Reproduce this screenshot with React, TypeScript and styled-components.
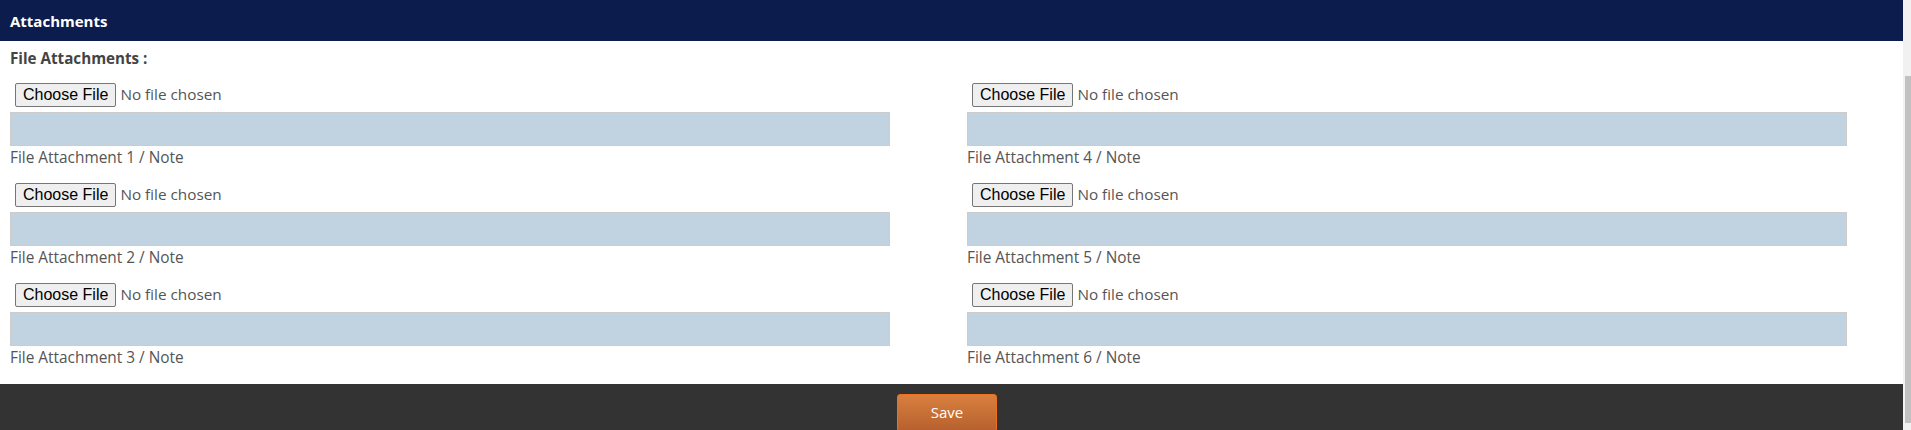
import React from 'react';
import styled, { createGlobalStyle } from 'styled-components';

const GlobalStyle = createGlobalStyle`
  html, body {
    margin: 0;
    padding: 0;
    height: 430px;
    overflow: hidden;
    background: #fff;
    font-family: "Open Sans", "Liberation Sans", sans-serif;
  }
`;

const Page = styled.div`
  display: flex;
  height: 430px;
`;

const Main = styled.div`
  flex: 1;
  display: flex;
  flex-direction: column;
  min-width: 0;
`;

const Header = styled.div`
  height: 41px;
  background: #0c1c4d;
  color: #fff;
  display: flex;
  align-items: center;
  padding-left: 10px;
  font-size: 15px;
  font-weight: 700;
`;

const Body = styled.div`
  flex: 1;
  padding: 7px 0 0 10px;
`;

const SectionTitle = styled.div`
  font-size: 15.2px;
  font-weight: 700;
  color: #444;
  line-height: 20px;
  margin-bottom: 15px;
`;

const Grid = styled.div`
  display: grid;
  grid-template-columns: 880px 880px;
  column-gap: 77px;
  row-gap: 15px;
  grid-auto-flow: column;
  grid-template-rows: repeat(3, auto);
`;

const Item = styled.div`
  display: flex;
  flex-direction: column;
`;

const FileInput = styled.input`
  margin: 0 0 5px 5px;
  height: 24px;
  font-family: "Open Sans", "Liberation Sans", sans-serif;
  font-size: 15.3px;
  color: #555;

  &::file-selector-button {
    font-family: "Liberation Sans", Arial, sans-serif;
    font-size: 16px;
    color: #000;
    height: 24px;
    padding: 0 7px;
    margin-right: 4px;
    border: 1px solid #767676;
    border-radius: 2px;
    background: #efefef;
  }
`;

const NoteBox = styled.input`
  box-sizing: border-box;
  width: 880px;
  height: 34px;
  background: #c1d3e1;
  border: 1px solid #cccccc;
  outline: none;
  margin: 0;
`;

const NoteLabel = styled.label`
  margin-top: 2px;
  font-size: 15.4px;
  line-height: 20px;
  color: #555;
`;

const Footer = styled.div`
  height: 46px;
  background: #333333;
  display: flex;
  justify-content: center;
  align-items: flex-start;
  padding: 10px 9px 0 0;
  box-sizing: border-box;
`;

const SaveButton = styled.button`
  width: 100px;
  height: 38px;
  border: 1px solid #f0701c;
  border-radius: 3px;
  background: linear-gradient(#d8803f, #b6602e);
  color: #fff;
  font-family: "Open Sans", "Liberation Sans", sans-serif;
  font-size: 15px;
  padding: 0 0 2px;
  cursor: pointer;
`;

const ScrollTrack = styled.div`
  width: 8px;
  background: #f1f1f1;
  display: flex;
  flex-direction: column;
  align-items: flex-end;
  padding-top: 76px;
  box-sizing: border-box;
`;

const ScrollThumb = styled.div`
  width: 6px;
  height: 347px;
  background: #c1c1c1;
`;

const attachments = [1, 2, 3, 4, 5, 6];

export default function App() {
  return (
    <>
      <GlobalStyle />
      <Page>
        <Main>
          <Header>Attachments</Header>
          <Body>
            <SectionTitle>File Attachments :</SectionTitle>
            <Grid>
              {attachments.map((n) => (
                <Item key={n}>
                  <FileInput type="file" />
                  <NoteBox type="text" id={`note-${n}`} />
                  <NoteLabel htmlFor={`note-${n}`}>File Attachment {n} / Note</NoteLabel>
                </Item>
              ))}
            </Grid>
          </Body>
          <Footer>
            <SaveButton type="button">Save</SaveButton>
          </Footer>
        </Main>
        <ScrollTrack>
          <ScrollThumb />
        </ScrollTrack>
      </Page>
    </>
  );
}
